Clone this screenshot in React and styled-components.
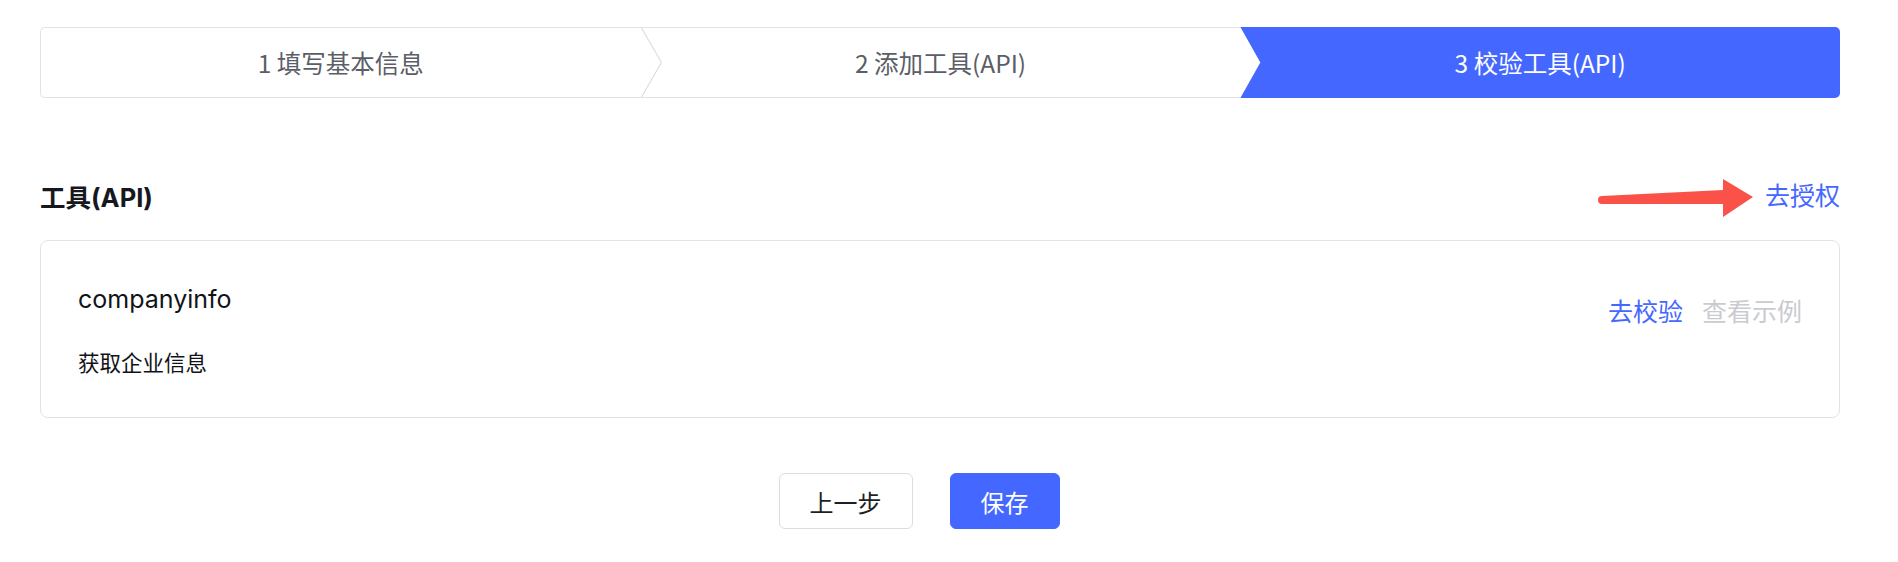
import React from "react";
import styled, { createGlobalStyle } from "styled-components";

const GlobalStyle = createGlobalStyle`
  body {
    margin: 0;
    background: #ffffff;
    font-family: Inter, "Noto Sans CJK SC", sans-serif;
    color: #1d1f24;
  }
`;

const BLUE = "#4468ff";

const Page = styled.div`
  padding: 27px 58px 0 40px;
`;

const Steps = styled.div`
  display: flex;
  height: 71px;
`;

const Step = styled.div`
  flex: 1;
  position: relative;
  display: flex;
  align-items: center;
  justify-content: center;
  box-sizing: border-box;
  font-family: "Noto Sans CJK SC", sans-serif;
  font-size: 24.5px;
  color: ${props => (props.active ? "#ffffff" : "#5b5e66")};
  background: ${props => (props.active ? BLUE : "#ffffff")};
  border-top: ${props => (props.active ? "none" : "1px solid #e2e3e6")};
  border-bottom: ${props => (props.active ? "none" : "1px solid #e2e3e6")};
  border-left: ${props => (props.first ? "1px solid #e2e3e6" : "none")};
  border-radius: ${props =>
    props.first ? "5px 0 0 5px" : props.active ? "0 5px 5px 0" : "0"};
  clip-path: ${props =>
    props.active
      ? "polygon(0 0, 100% 0, 100% 100%, 0 100%, 20px 50%)"
      : "none"};
`;

const Chevron = styled.svg`
  position: absolute;
  left: 0;
  top: -1px;
  width: 21px;
  height: calc(100% + 2px);
`;

const HeadRow = styled.div`
  display: flex;
  justify-content: space-between;
  align-items: center;
  margin-top: 80px;
  line-height: 36px;
`;

const Heading = styled.h2`
  margin: 0;
  font-size: 25.5px;
  font-weight: 700;
  color: #16181d;
`;

const LinkWrap = styled.div`
  position: relative;
`;

const Link = styled.a`
  font-size: 25px;
  color: ${props => (props.muted ? "#c9cbd1" : BLUE)};
  cursor: pointer;
  text-decoration: none;
`;

const Arrow = styled.svg`
  position: absolute;
  right: calc(100% + 9px);
  top: 50%;
  transform: translateY(-50%);
  width: 160px;
  height: 40px;
`;

const Card = styled.div`
  display: flex;
  justify-content: space-between;
  align-items: flex-start;
  margin-top: 23px;
  padding: 40px 37px 38px;
  border: 1px solid #e2e3e7;
  border-radius: 8px;
`;

const CardBody = styled.div`
  display: flex;
  flex-direction: column;
  gap: 30px;
`;

const ToolName = styled.div`
  font-size: 25px;
  line-height: 36px;
  color: #111318;
`;

const ToolDesc = styled.div`
  font-size: 21.5px;
  line-height: 32px;
  color: #111318;
`;

const Actions = styled.div`
  display: flex;
  gap: 19px;
  margin-top: 13px;
  line-height: 36px;
`;

const Footer = styled.div`
  display: flex;
  justify-content: center;
  margin-top: 55px;
`;

const Button = styled.button`
  height: 56px;
  width: ${props => props.width}px;
  margin-right: ${props => (props.primary ? 42 : 37)}px;
  border-radius: 6px;
  font-family: Inter, "Noto Sans CJK SC", sans-serif;
  font-size: 24px;
  cursor: pointer;
  border: 1px solid ${props => (props.primary ? BLUE : "#dcdde1")};
  background: ${props => (props.primary ? BLUE : "#ffffff")};
  color: ${props => (props.primary ? "#ffffff" : "#1d1f24")};
`;

const steps = ["1 填写基本信息", "2 添加工具(API)", "3 校验工具(API)"];

export default function App() {
  const current = 2;
  return (
    <Page>
      <GlobalStyle />
      <Steps>
        {steps.map((label, index) => (
          <Step
            key={label}
            first={index === 0}
            active={index === current}
          >
            {index > 0 && index !== current && (
              <Chevron viewBox="0 0 21 73" preserveAspectRatio="none">
                <polyline
                  points="0.5,1 20.5,36.5 0.5,72"
                  fill="none"
                  stroke="#dcdde1"
                  strokeWidth="1.2"
                />
              </Chevron>
            )}
            {label}
          </Step>
        ))}
      </Steps>

      <HeadRow>
        <Heading>工具(API)</Heading>
        <LinkWrap>
          <Arrow viewBox="0 0 160 40">
            <path
              d="M6 18 L127 12 L127 1 L157 19 L127 39 L127 26 L6 26 A4 4 0 0 1 6 18 Z"
              fill="#fa5249"
            />
          </Arrow>
          <Link>去授权</Link>
        </LinkWrap>
      </HeadRow>

      <Card>
        <CardBody>
          <ToolName>companyinfo</ToolName>
          <ToolDesc>获取企业信息</ToolDesc>
        </CardBody>
        <Actions>
          <Link>去校验</Link>
          <Link muted>查看示例</Link>
        </Actions>
      </Card>

      <Footer>
        <Button width={134}>上一步</Button>
        <Button primary width={110}>
          保存
        </Button>
      </Footer>
    </Page>
  );
}
